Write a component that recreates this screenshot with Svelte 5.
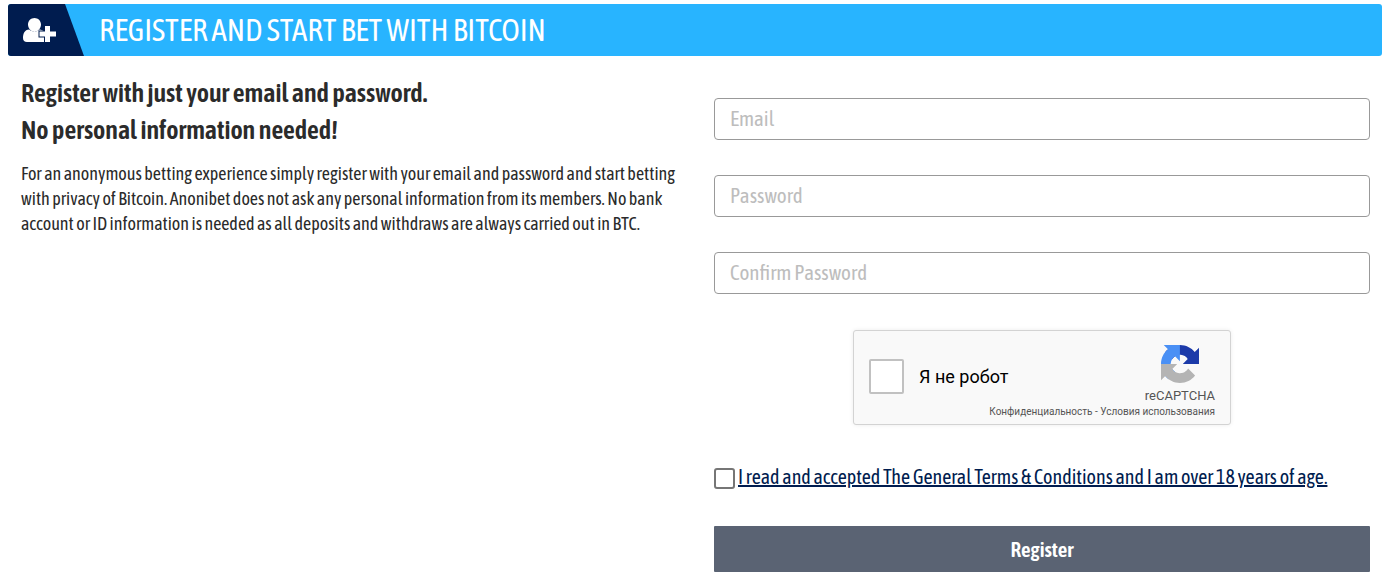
<script>
  let email = $state('');
  let password = $state('');
  let confirmation = $state('');
  let human = $state(false);
  let accepted = $state(false);
</script>

<main>
  <header>
    <div class="badge">
      <svg viewBox="0 0 34 26" width="34" height="26" aria-hidden="true">
        <path
          fill="#fff"
          d="M11.500 1C15 1 18 3.800 18 7.500C18 11 15.500 14.500 11.500 14.500C7.500 14.500 5 11 5 7.500C5 3.800 8 1 11.500 1ZM6.200 12.500C7.700 14 9.500 14.500 11.500 14.500C13.500 14.500 15.200 14 16.500 12.500C20.500 12.500 23 16 23 21V25H4C1.500 25 0 23.600 0 21C0 17 1.500 12.500 6.200 12.500Z"
        />
        <path
          fill="#fff"
          stroke="#001c4f"
          stroke-width="2"
          paint-order="stroke"
          d="M22 9H27V14.500H33V19.500H27V25H22V19.500H16.500V14.500H22Z"
        />
      </svg>
    </div>
    <h1>REGISTER AND START BET WITH BITCOIN</h1>
  </header>

  <div class="content">
    <section class="intro">
      <h2>Register with just your email and password.<br />No personal information needed!</h2>
      <p>
        For an anonymous betting experience simply register with your email and password and start betting<br />
        with privacy of Bitcoin. Anonibet does not ask any personal information from its members. No bank<br />
        account or ID information is needed as all deposits and withdraws are always carried out in BTC.
      </p>
    </section>

    <form onsubmit={(e) => e.preventDefault()}>
      <div class="fields">
        <input type="email" placeholder="Email" aria-label="Email" bind:value={email} />
        <input type="password" placeholder="Password" aria-label="Password" bind:value={password} />
        <input
          type="password"
          placeholder="Confirm Password"
          aria-label="Confirm Password"
          bind:value={confirmation}
        />
      </div>

      <div class="captcha">
        <label class="robot">
          <input type="checkbox" bind:checked={human} />
          <span>Я не робот</span>
        </label>
        <div class="brand">
          <svg viewBox="0 0 64 64" width="38" height="38" aria-hidden="true">
            <path
              fill="#1c3aa9"
              d="M64 31.955l-.033-1.370V4.687l-7.160 7.160C50.948 4.674 42.033.093 32.050.093c-10.400 0-19.622 4.960-25.458 12.640l11.736 11.860a15.550 15.550 0 0 1 4.754-5.334c2.050-1.600 4.952-2.906 8.968-2.906.485 0 .860.057 1.135.163 4.976.393 9.288 3.140 11.828 7.124l-8.307 8.307L64 31.953"
            />
            <path
              fill="#4a90f5"
              d="M31.862.094l-1.370.033H4.594l7.160 7.160C4.580 13.147 0 22.060 0 32.046c0 10.400 4.960 19.622 12.640 25.458L24.500 45.768a15.550 15.550 0 0 1-5.334-4.754c-1.600-2.050-2.906-4.952-2.906-8.968 0-.485.057-.860.163-1.135.393-4.976 3.140-9.288 7.124-11.828l8.307 8.307L31.860.095"
            />
            <path
              fill="#b4b4b4"
              d="M.001 32.045l.033 1.370v25.898l7.160-7.160c5.860 7.173 14.774 11.754 24.760 11.754 10.400 0 19.622-4.960 25.458-12.640l-11.736-11.860a15.550 15.550 0 0 1-4.754 5.334c-2.050 1.600-4.952 2.906-8.968 2.906-.485 0-.860-.057-1.135-.163-4.976-.393-9.288-3.140-11.828-7.124l8.307-8.307c-10.522.040-22.400.066-27.295-.005"
            />
          </svg>
          <span>reCAPTCHA</span>
        </div>
        <div class="links">
          <a href="#privacy">Конфиденциальность</a> - <a href="#usage">Условия использования</a>
        </div>
      </div>

      <div class="terms">
        <input id="terms" type="checkbox" bind:checked={accepted} />
        <label for="terms">
          <a href="#terms">I read and accepted The General Terms &amp; Conditions and I am over 18 years of age.</a>
        </label>
      </div>

      <button type="submit">Register</button>
    </form>
  </div>
</main>

<style>
  :global(body) {
    margin: 0;
    background: #fff;
  }

  main {
    padding: 4px 10px 16px 8px;
    font-family: 'Asap Condensed', 'Liberation Sans Narrow', 'Open Sans Condensed', 'Roboto Condensed', 'Noto Sans', sans-serif;
    color: #2b2b2b;
  }

  * {
    box-sizing: border-box;
  }

  header {
    display: flex;
    height: 52px;
    border-radius: 3px;
    overflow: hidden;
    background: #28b4ff;
  }

  .badge {
    display: flex;
    align-items: center;
    flex: none;
    width: 76px;
    padding-left: 15px;
    background: #001c4f;
    clip-path: polygon(0 0, 57px 0, 100% 100%, 0 100%);
  }

  h1 {
    margin: 0;
    padding-left: 15px;
    font-size: 31px;
    font-weight: 400;
    line-height: 52px;
    color: #fff;
    white-space: nowrap;
  }

  .content {
    display: grid;
    grid-template-columns: minmax(0, 1fr) minmax(0, 1fr);
    gap: 37px;
    padding: 0 12px 0 13px;
  }

  .intro {
    padding-top: 19px;
    white-space: nowrap;
  }

  h2 {
    margin: 0;
    font-size: 26px;
    font-weight: 600;
    line-height: 37px;
  }

  p {
    margin: 12px 0 0;
    font-size: 18px;
    line-height: 25px;
  }

  form {
    display: flex;
    flex-direction: column;
    padding-top: 42px;
  }

  .fields {
    display: grid;
    gap: 35px;
  }

  .fields input {
    width: 100%;
    height: 42px;
    padding: 0 15px 2px;
    border: 1px solid #999;
    border-radius: 4px;
    background: #fff;
    font: inherit;
    font-size: 21px;
    color: inherit;
  }

  .fields input::placeholder {
    color: #bdbdbd;
    opacity: 1;
  }

  .captcha {
    display: grid;
    grid-template-columns: 1fr auto;
    grid-template-rows: 75px auto;
    align-self: center;
    width: 378px;
    height: 95px;
    margin-top: 36px;
    padding: 0 15px;
    border: 1px solid #d3d3d3;
    border-radius: 3px;
    background: #f9f9f9;
    box-shadow: 0 0 4px rgba(0, 0, 0, 0.08);
    font-family: Roboto, sans-serif;
  }

  .robot {
    display: flex;
    align-items: center;
    gap: 15px;
    padding-top: 15px;
    font-size: 18px;
    color: #000;
  }

  .robot input {
    appearance: none;
    width: 35px;
    height: 35px;
    margin: 0;
    border: 2px solid #c1c1c1;
    border-radius: 2px;
    background: #fff;
  }

  .robot input:checked {
    background: #4a8df5;
  }

  .brand {
    display: flex;
    flex-direction: column;
    align-items: center;
    padding-top: 14px;
    font-size: 13px;
    line-height: 26px;
    color: #555;
  }

  .brand svg {
    flex: none;
  }

  .links {
    grid-column: 1 / -1;
    text-align: right;
    font-size: 10px;
    line-height: 12px;
    color: #555;
  }

  .links a {
    color: inherit;
    text-decoration: none;
  }

  .terms {
    display: flex;
    align-items: center;
    gap: 3px;
    margin-top: 37px;
    font-size: 20px;
    line-height: 30px;
    white-space: nowrap;
  }

  .terms input {
    appearance: none;
    flex: none;
    width: 21px;
    height: 21px;
    margin: 2px 0 0;
    border: 2px solid #767676;
    border-radius: 3px;
    background: #fff;
  }

  .terms input:checked {
    background: #001c4f;
  }

  .terms a {
    color: #001c4f;
    text-decoration: underline;
  }

  button {
    height: 46px;
    margin-top: 34px;
    border: 0;
    border-radius: 1px;
    background: #5a6373;
    font: inherit;
    font-size: 21px;
    font-weight: 600;
    color: #fff;
  }
</style>
